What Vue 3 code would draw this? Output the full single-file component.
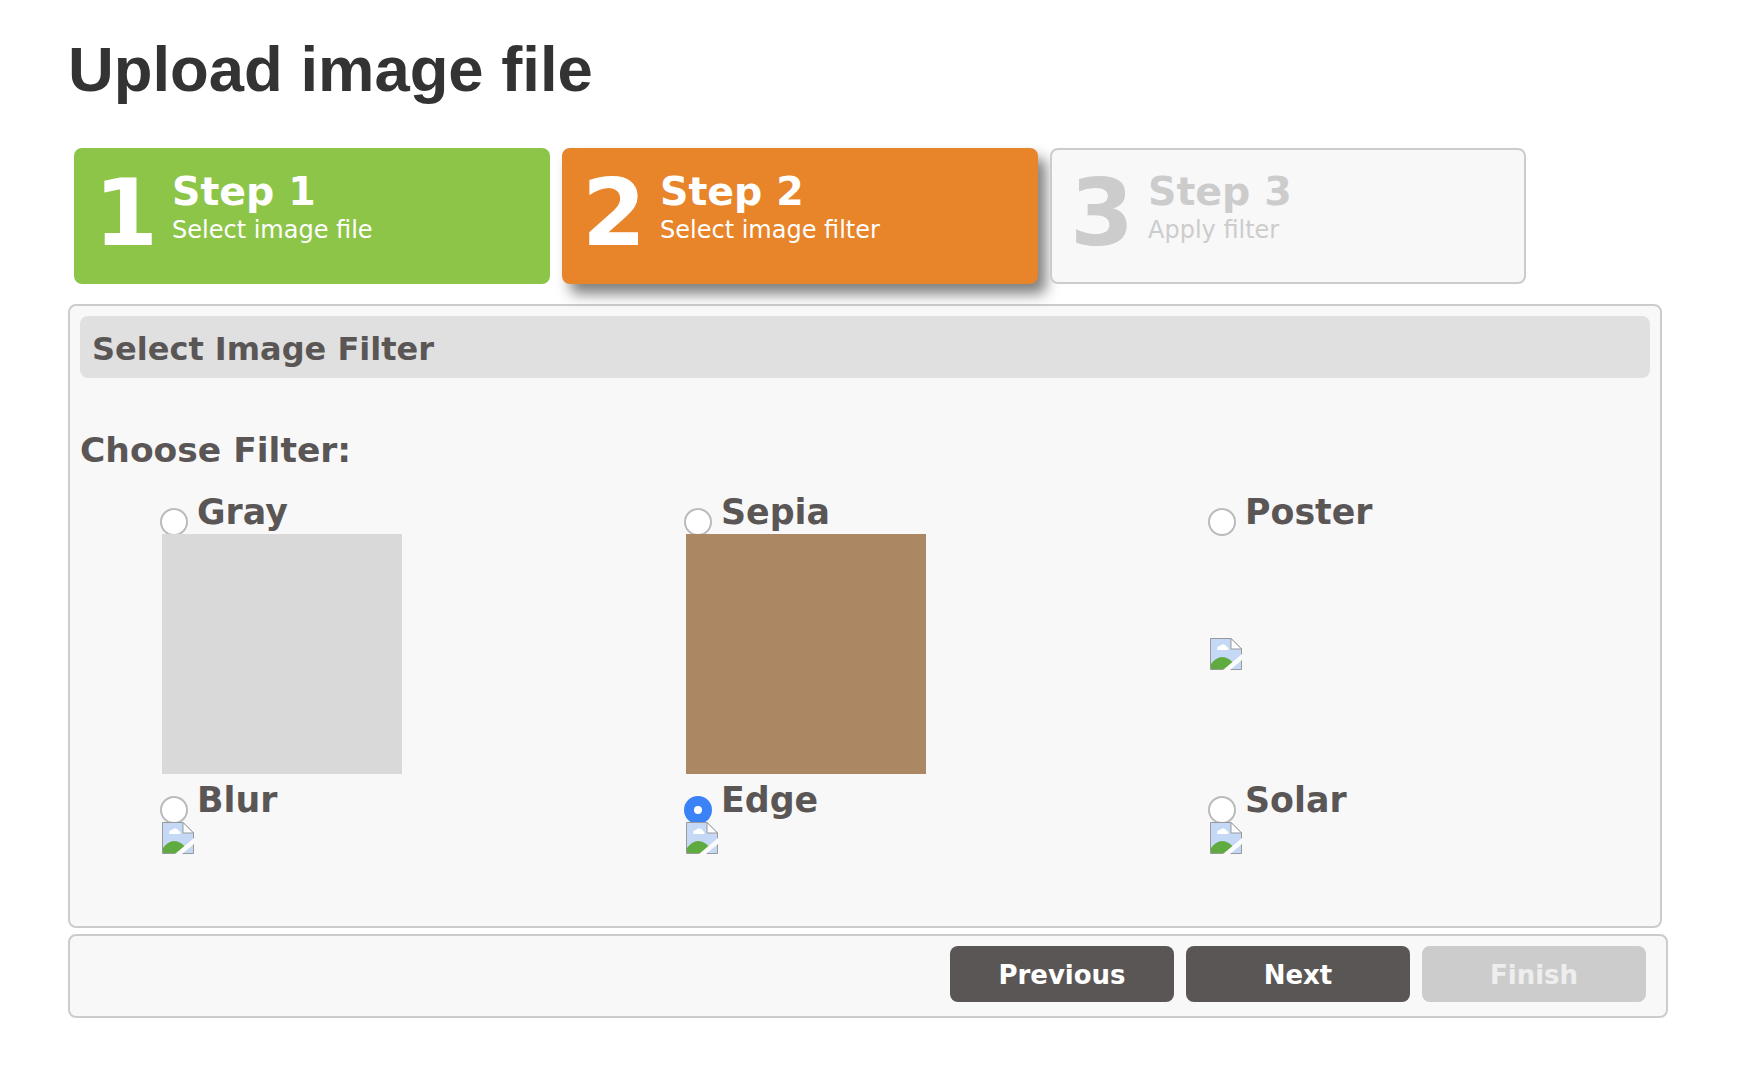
<template>
  <div class="page">
    <h1 class="page-title">Upload image file</h1>

    <div class="steps">
      <div v-for="step in steps" :key="step.num" class="step" :class="step.state">
        <div class="step-num">{{ step.num }}</div>
        <div class="step-text">
          <div class="step-title">Step {{ step.num }}</div>
          <div class="step-desc">{{ step.desc }}</div>
        </div>
      </div>
    </div>

    <div class="panel">
      <div class="panel-header">Select Image Filter</div>
      <div class="choose">Choose Filter:</div>
      <div class="filters">
        <label v-for="f in filters" :key="f.name" class="filter">
          <span class="filter-head">
            <input v-model="selected" class="radio" type="radio" name="filter" :value="f.name" />
            <span class="filter-name">{{ f.name }}</span>
          </span>
          <span class="filter-thumb">
            <span v-if="f.color" class="swatch" :style="{ background: f.color }"></span>
            <svg v-else class="broken" viewBox="0 0 32 32" width="32" height="32">
              <path d="M.5.5H21L31.5 11V31.5H.5Z" fill="#c5d8f6" stroke="#999" />
              <path d="M21 .5V11H31.5Z" fill="#fff" stroke="#999" />
              <path d="M7 11a3 3 0 0 1 3-3 4 4 0 0 1 7 1 2 2 0 0 1 1 3H8a2 2 0 0 1-1-1Z" fill="#fff" />
              <path d="M1 31V26C4 22 8 19 12 19 17 19 21 22 24 26L19 31Z" fill="#5fab3f" />
              <path d="M13 32 32 16V22L20 32Z" fill="#fbfbfb" />
            </svg>
          </span>
        </label>
      </div>
    </div>

    <div class="footer">
      <button class="btn">Previous</button>
      <button class="btn">Next</button>
      <button class="btn disabled" disabled>Finish</button>
    </div>
  </div>
</template>

<script setup>
import { ref } from "vue";

const selected = ref("Edge");

const steps = [
  { num: 1, desc: "Select image file", state: "done" },
  { num: 2, desc: "Select image filter", state: "active" },
  { num: 3, desc: "Apply filter", state: "todo" },
];

const filters = [
  { name: "Gray", color: "#d9d9d9" },
  { name: "Sepia", color: "#ab8863" },
  { name: "Poster" },
  { name: "Blur" },
  { name: "Edge" },
  { name: "Solar" },
];
</script>

<style>
body {
  background: #fff;
}
</style>

<style scoped>
.page {
  width: 1600px;
  margin-left: 68px;
  font-family: "DejaVu Sans", Verdana, sans-serif;
  color: #5a5655;
}
.page-title {
  margin: 0;
  padding-top: 34px;
  height: 148px;
  box-sizing: border-box;
  font-family: "Liberation Sans", Arial, sans-serif;
  font-size: 63.4px;
  line-height: 70px;
  font-weight: 700;
  color: #333;
}
.steps {
  display: flex;
  gap: 12px;
  margin: 0 0 20px 6px;
}
.step {
  display: flex;
  box-sizing: border-box;
  width: 476px;
  height: 136px;
  padding-left: 20px;
  border-radius: 8px;
}
.step.done {
  background: #8dc549;
  color: #fff;
}
.step.active {
  background: #e8842a;
  color: #fff;
  box-shadow: 8px 10px 14px rgba(0, 0, 0, 0.5);
}
.step.todo {
  padding-left: 18px;
  background: #f8f8f8;
  border: 2px solid #ccc;
  color: #ccc;
}
.step-num {
  width: 78px;
  flex-shrink: 0;
  font-size: 92px;
  font-weight: 700;
  line-height: 132px;
}
.step.todo .step-num {
  margin-top: -2px;
}
.step-text {
  padding-top: 20px;
}
.step.todo .step-text {
  padding-top: 18px;
}
.step-title {
  font-size: 39.5px;
  font-weight: 700;
  line-height: 46px;
}
.step-desc {
  font-size: 24px;
  line-height: 32px;
}
.panel {
  box-sizing: border-box;
  width: 1594px;
  height: 624px;
  padding: 10px;
  background: #f8f8f8;
  border: 2px solid #ccc;
  border-radius: 8px;
}
.panel-header {
  height: 62px;
  padding-left: 12px;
  font-size: 32px;
  font-weight: 700;
  line-height: 66px;
  background: #e0e0e0;
  border-radius: 8px;
}
.choose {
  margin-top: 50px;
  font-size: 34.5px;
  font-weight: 700;
  line-height: 44px;
}
.filters {
  display: grid;
  grid-template-columns: repeat(3, 524px);
  margin-top: 14px;
  padding-left: 80px;
}
.filter {
  display: flex;
  flex-direction: column;
}
.filter-head {
  display: flex;
  height: 48px;
}
.radio {
  appearance: none;
  box-sizing: border-box;
  width: 28px;
  height: 28px;
  margin: 22px 9px 0 0;
  background: #fff;
  border: 2px solid #bbb;
  border-radius: 50%;
}
.radio:checked {
  background: #fff;
  border: 10px solid #3b82f6;
}
.filter-name {
  font-size: 34.8px;
  font-weight: 700;
  line-height: 52px;
}
.filter-thumb {
  display: flex;
  flex: 1;
  align-items: center;
  padding-left: 2px;
}
.swatch {
  display: block;
  width: 240px;
  height: 240px;
}
.broken {
  display: block;
}
.footer {
  display: flex;
  justify-content: flex-end;
  gap: 12px;
  box-sizing: border-box;
  height: 84px;
  margin-top: 6px;
  padding: 10px 20px 0 0;
  background: #f8f8f8;
  border: 2px solid #ccc;
  border-radius: 8px;
}
.btn {
  width: 224px;
  height: 56px;
  padding: 2px 0 0;
  font-family: inherit;
  font-size: 26px;
  font-weight: 700;
  color: #fff;
  background: #5a5655;
  border: none;
  border-radius: 8px;
}
.btn.disabled {
  color: #eee;
  background: #ccc;
}
</style>
